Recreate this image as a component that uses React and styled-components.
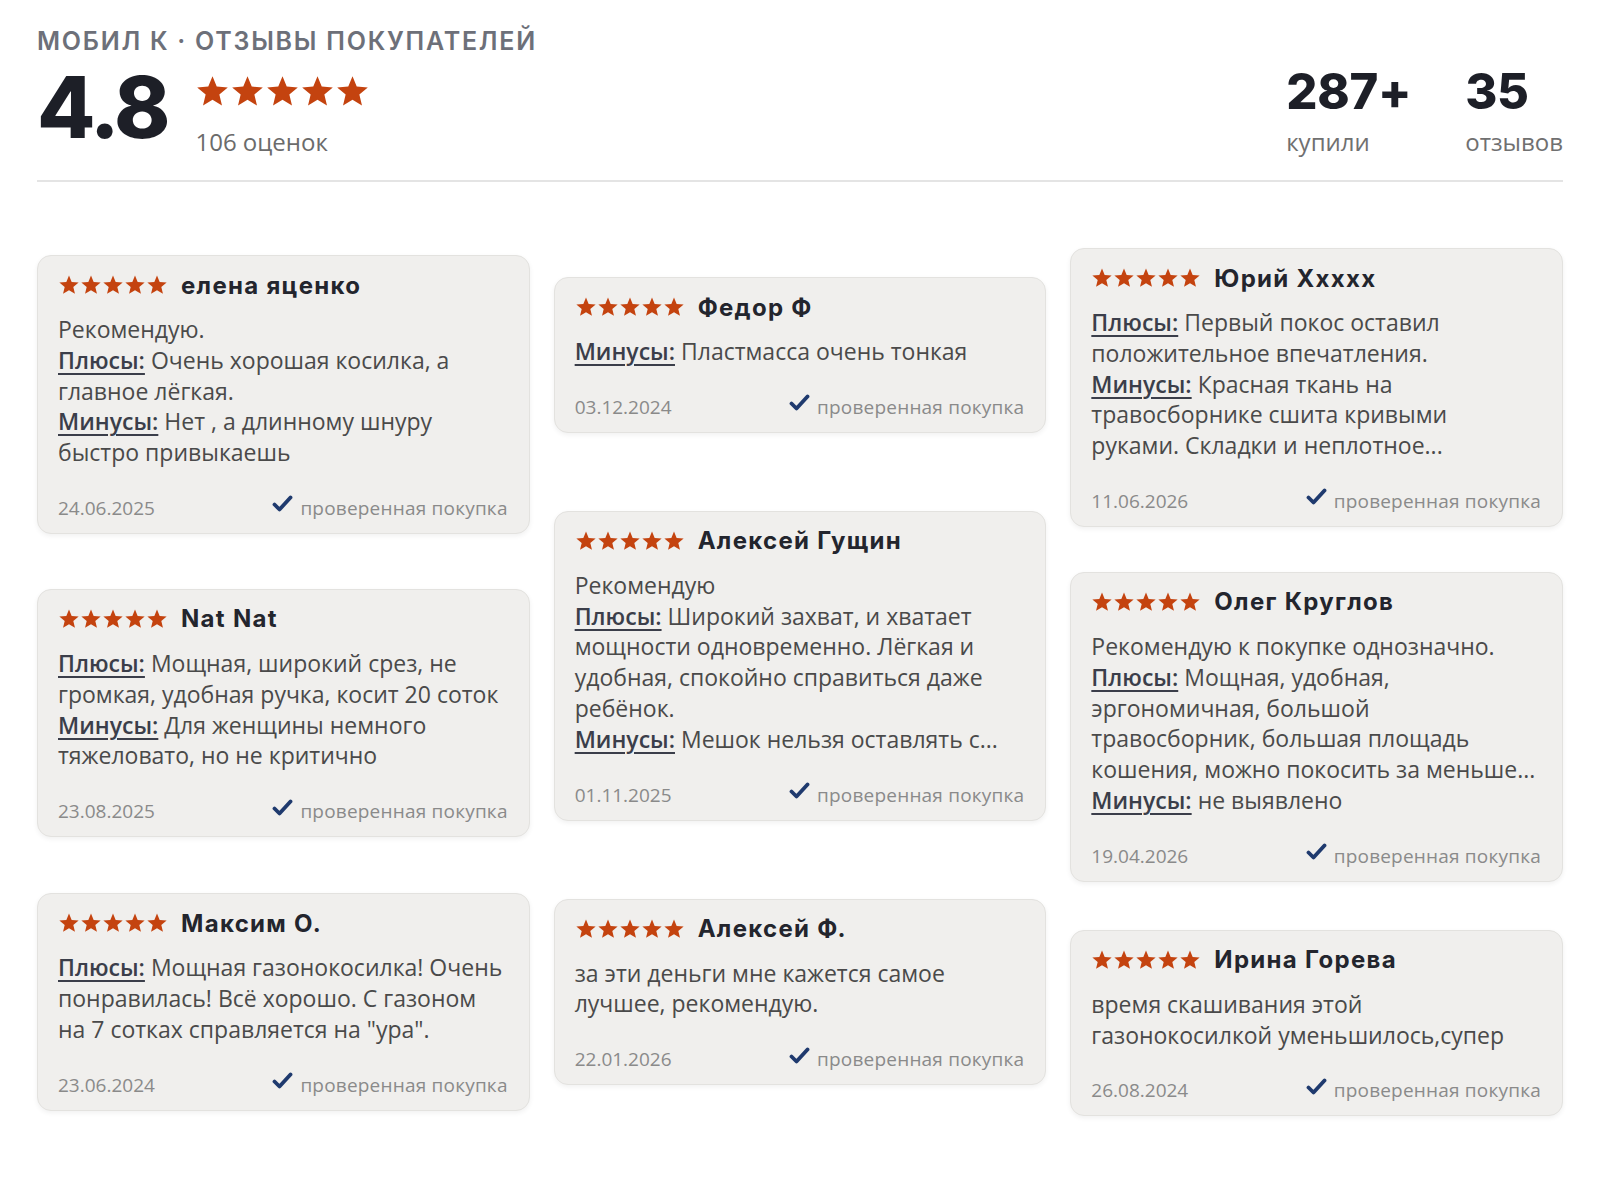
import React from "react";
import styled, { createGlobalStyle } from "styled-components";

const GlobalStyle = createGlobalStyle`
  html, body {
    margin: 0;
    padding: 0;
    background: #ffffff;
  }
  body {
    font-family: "Open Sans", "Noto Sans", sans-serif;
    -webkit-font-smoothing: antialiased;
  }
`;

const Page = styled.main`
  width: 1600px;
  box-sizing: border-box;
  padding: 26px 37px 60px;
`;

const Header = styled.header`
  display: flex;
  justify-content: space-between;
  align-items: flex-start;
  padding-bottom: 23px;
  border-bottom: 2px solid #e4e4e4;
`;

const TitleBlock = styled.div`
  display: flex;
  flex-direction: column;
`;

const Kicker = styled.h1`
  margin: 0;
  font-family: "Inter", "Noto Sans", sans-serif;
  font-weight: 600;
  font-size: 25px;
  line-height: 30px;
  letter-spacing: 1.75px;
  color: #6d7079;
  text-transform: uppercase;
`;

const RatingRow = styled.div`
  display: flex;
  align-items: flex-start;
  gap: 28px;
  margin-top: 10px;
`;

const BigScore = styled.div`
  font-family: "Inter", "Noto Sans", sans-serif;
  font-weight: 800;
  font-size: 85px;
  line-height: 84px;
  letter-spacing: -3px;
  color: #1d1f27;
`;

const RatingMeta = styled.div`
  display: flex;
  flex-direction: column;
  gap: 18px;
  padding-top: 8px;
`;

const StarRow = styled.div`
  display: flex;
  gap: ${(p) => p.$gap}px;
`;

const CountText = styled.div`
  font-size: 24px;
  line-height: 30px;
  color: #6b6b6b;
`;

const Stats = styled.div`
  display: flex;
  gap: 54px;
  padding-top: 42px;
`;

const Stat = styled.div`
  display: flex;
  flex-direction: column;
  gap: 11px;
`;

const StatValue = styled.div`
  font-family: "Inter", "Noto Sans", sans-serif;
  font-weight: 800;
  font-size: 49px;
  line-height: 48px;
  letter-spacing: -0.3px;
  color: #1d1f27;
`;

const StatLabel = styled.div`
  font-size: 24px;
  line-height: 30px;
  color: #707070;
`;

const Board = styled.section`
  display: grid;
  grid-template-columns: repeat(3, 1fr);
  column-gap: 24px;
  align-items: start;
`;

const Column = styled.div`
  display: flex;
  flex-direction: column;
`;

const Card = styled.article`
  margin-top: ${(p) => p.$offset}px;
  background: #f0efed;
  border: 1px solid #e3e2df;
  border-radius: 14px;
  box-shadow: 0 2px 5px rgba(0, 0, 0, 0.06);
  padding: 14px 21px 12px 20px;
`;

const CardHead = styled.div`
  display: flex;
  align-items: center;
  gap: 13px;
  height: 30px;
`;

const Author = styled.div`
  font-family: "Inter", "Noto Sans", sans-serif;
  font-weight: 700;
  font-size: 24px;
  letter-spacing: 1.3px;
  color: #23252d;
`;

const Body = styled.div`
  margin-top: 14px;
  font-size: 23px;
  line-height: 30.8px;
  color: #4a4a4a;
  white-space: nowrap;
`;

const Para = styled.div``;

const Label = styled.span`
  font-weight: 600;
  color: #3b3e4a;
  text-decoration: underline;
  text-decoration-thickness: 2px;
  text-underline-offset: 4px;
`;

const Footer = styled.div`
  display: flex;
  justify-content: space-between;
  align-items: center;
  margin-top: 27px;
  height: 26px;
  font-size: 19px;
  color: #8a8a8a;
`;

const Verified = styled.div`
  display: flex;
  align-items: center;
  gap: 7px;
  letter-spacing: 0.2px;
`;

const CheckIcon = styled.svg`
  width: 21px;
  height: 18px;
  margin-top: -7px;
`;

function Star({ size }) {
  return (
    <svg width={size} height={size} viewBox="0 0 24 24" aria-hidden="true">
      <polygon
        fill="#c4430f"
        points="12,1.5 14.9,8.6 22.5,9.2 16.7,14.1 18.5,21.6 12,17.6 5.5,21.6 7.3,14.1 1.5,9.2 9.1,8.6"
      />
    </svg>
  );
}

function Stars({ size, gap }) {
  return (
    <StarRow $gap={gap}>
      {[0, 1, 2, 3, 4].map((i) => (
        <Star key={i} size={size} />
      ))}
    </StarRow>
  );
}

// Each paragraph keeps the line breaks of the card's clamped text.
const columns = [
  [
    {
      offset: 73,
      name: "елена яценко",
      date: "24.06.2025",
      parts: [
        { lines: ["Рекомендую."] },
        { label: "Плюсы:", lines: ["Очень хорошая косилка, а", "главное лёгкая."] },
        { label: "Минусы:", lines: ["Нет , а длинному шнуру", "быстро привыкаешь"] },
      ],
    },
    {
      offset: 55,
      name: "Nat Nat",
      date: "23.08.2025",
      parts: [
        {
          label: "Плюсы:",
          lines: ["Мощная, широкий срез, не", "громкая, удобная ручка, косит 20 соток"],
        },
        { label: "Минусы:", lines: ["Для женщины немного", "тяжеловато, но не критично"] },
      ],
    },
    {
      offset: 56,
      name: "Максим О.",
      date: "23.06.2024",
      parts: [
        {
          label: "Плюсы:",
          lines: [
            "Мощная газонокосилка! Очень",
            "понравилась! Всё хорошо. С газоном",
            'на 7 сотках справляется на "ура".',
          ],
        },
      ],
    },
  ],
  [
    {
      offset: 95,
      name: "Федор Ф",
      date: "03.12.2024",
      parts: [{ label: "Минусы:", lines: ["Пластмасса очень тонкая"] }],
    },
    {
      offset: 78,
      name: "Алексей Гущин",
      date: "01.11.2025",
      parts: [
        { lines: ["Рекомендую"] },
        {
          label: "Плюсы:",
          lines: [
            "Широкий захват, и хватает",
            "мощности одновременно. Лёгкая и",
            "удобная, спокойно справиться даже",
            "ребёнок.",
          ],
        },
        { label: "Минусы:", lines: ["Мешок нельзя оставлять с..."] },
      ],
    },
    {
      offset: 78,
      name: "Алексей Ф.",
      date: "22.01.2026",
      parts: [{ lines: ["за эти деньги мне кажется самое", "лучшее, рекомендую."] }],
    },
  ],
  [
    {
      offset: 66,
      name: "Юрий Ххххх",
      date: "11.06.2026",
      parts: [
        { label: "Плюсы:", lines: ["Первый покос оставил", "положительное впечатления."] },
        {
          label: "Минусы:",
          lines: [
            "Красная ткань на",
            "травосборнике сшита кривыми",
            "руками. Складки и неплотное...",
          ],
        },
      ],
    },
    {
      offset: 45,
      name: "Олег Круглов",
      date: "19.04.2026",
      parts: [
        { lines: ["Рекомендую к покупке однозначно."] },
        {
          label: "Плюсы:",
          lines: [
            "Мощная, удобная,",
            "эргономичная, большой",
            "травосборник, большая площадь",
            "кошения, можно покосить за меньше...",
          ],
        },
        { label: "Минусы:", lines: ["не выявлено"] },
      ],
    },
    {
      offset: 48,
      name: "Ирина Горева",
      date: "26.08.2024",
      parts: [{ lines: ["время скашивания этой", "газонокосилкой уменьшилось,супер"] }],
    },
  ],
];

function Paragraph({ label, lines }) {
  return (
    <Para>
      {label && (
        <>
          <Label>{label}</Label>{" "}
        </>
      )}
      {lines.map((line, i) => (
        <React.Fragment key={i}>
          {i > 0 && <br />}
          {line}
        </React.Fragment>
      ))}
    </Para>
  );
}

function ReviewCard({ review }) {
  return (
    <Card $offset={review.offset}>
      <CardHead>
        <Stars size={22} gap={0} />
        <Author>{review.name}</Author>
      </CardHead>
      <Body>
        {review.parts.map((p, i) => (
          <Paragraph key={i} label={p.label} lines={p.lines} />
        ))}
      </Body>
      <Footer>
        <span>{review.date}</span>
        <Verified>
          <CheckIcon viewBox="0 0 21 18" aria-hidden="true">
            <path
              d="M2.5 9.5 L7.5 14.5 L18.5 2.5"
              fill="none"
              stroke="#1f3a6e"
              strokeWidth="3.8"
              strokeLinecap="round"
              strokeLinejoin="round"
            />
          </CheckIcon>
          проверенная покупка
        </Verified>
      </Footer>
    </Card>
  );
}

export default function App() {
  return (
    <>
      <GlobalStyle />
      <Page>
        <Header>
          <TitleBlock>
            <Kicker>Мобил К · Отзывы покупателей</Kicker>
            <RatingRow>
              <BigScore>4.8</BigScore>
              <RatingMeta>
                <Stars size={35} gap={0} />
                <CountText>106 оценок</CountText>
              </RatingMeta>
            </RatingRow>
          </TitleBlock>
          <Stats>
            <Stat>
              <StatValue>287+</StatValue>
              <StatLabel>купили</StatLabel>
            </Stat>
            <Stat>
              <StatValue>35</StatValue>
              <StatLabel>отзывов</StatLabel>
            </Stat>
          </Stats>
        </Header>
        <Board>
          {columns.map((col, i) => (
            <Column key={i}>
              {col.map((r) => (
                <ReviewCard key={r.name} review={r} />
              ))}
            </Column>
          ))}
        </Board>
      </Page>
    </>
  );
}
